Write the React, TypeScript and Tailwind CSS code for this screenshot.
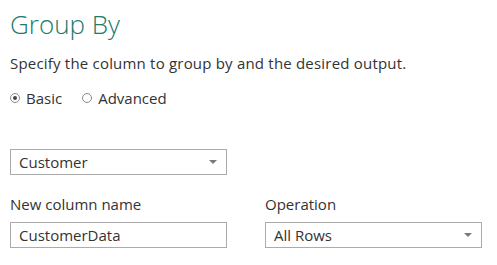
import React from 'react';

function Radio({ checked, label }: { checked?: boolean; label: string }) {
  return (
    <label className="flex items-center gap-[6px]">
      <span className="w-[10px] h-[10px] rounded-full border border-[#8a8a8a] flex items-center justify-center bg-white">
        {checked && <span className="w-[4px] h-[4px] rounded-full bg-[#444]" />}
      </span>
      <span>{label}</span>
    </label>
  );
}

function Caret() {
  return (
    <svg width="8" height="5" viewBox="0 0 8 5" className="mr-[4px]">
      <path d="M0 0 H8 L4 4 Z" fill="#7a7a7a" />
    </svg>
  );
}

export default function App() {
  return (
    <div
      className="w-[497px] h-[265px] bg-white text-[#333333] px-[10px] pt-[7px]"
      style={{ fontFamily: '"Open Sans", "Noto Sans", sans-serif' }}
    >
      <h1 className="text-[26px] font-light leading-[34px] text-[#217a6a]">Group By</h1>
      <p className="mt-[12px] text-[15px] leading-[20px] tracking-[0.2px]">Specify the column to group by and the desired output.</p>

      <div className="mt-[15px] flex items-center gap-[20px] text-[15px] leading-[20px]">
        <Radio checked label="Basic" />
        <Radio label="Advanced" />
      </div>

      <div className="mt-[41px] w-[217px] h-[26px] border border-[#ababab] flex items-center justify-between pl-[8px] pr-[5px] text-[15px]">
        <span>Customer</span>
        <Caret />
      </div>

      <div className="mt-[19px] flex gap-[38px] text-[15px]">
        <div className="flex flex-col">
          <span className="leading-[20px]">New column name</span>
          <div className="mt-[8px] w-[217px] h-[26px] border border-[#ababab] flex items-center pl-[8px]">
            CustomerData
          </div>
        </div>
        <div className="flex flex-col">
          <span className="leading-[20px]">Operation</span>
          <div className="mt-[8px] w-[217px] h-[26px] border border-[#ababab] flex items-center justify-between pl-[8px] pr-[5px]">
            <span>All Rows</span>
            <Caret />
          </div>
        </div>
      </div>
    </div>
  );
}
